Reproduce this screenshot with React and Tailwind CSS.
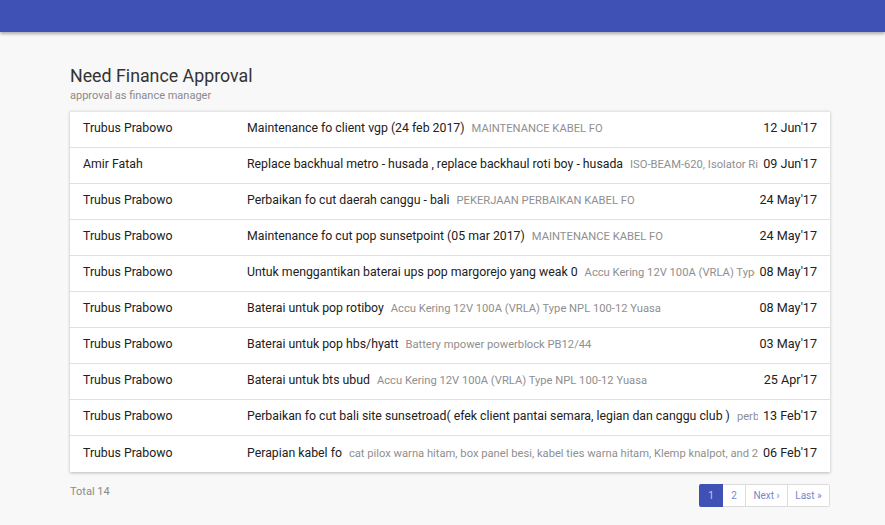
const rows = [
  ["Trubus Prabowo", "Maintenance fo client vgp (24 feb 2017)", "MAINTENANCE KABEL FO", "12 Jun'17"],
  ["Amir Fatah", "Replace backhual metro - husada , replace backhaul roti boy - husada", "ISO-BEAM-620, Isolator Rimbun, Isolator Gantung", "09 Jun'17"],
  ["Trubus Prabowo", "Perbaikan fo cut daerah canggu - bali", "PEKERJAAN PERBAIKAN KABEL FO", "24 May'17"],
  ["Trubus Prabowo", "Maintenance fo cut pop sunsetpoint (05 mar 2017)", "MAINTENANCE KABEL FO", "24 May'17"],
  ["Trubus Prabowo", "Untuk menggantikan baterai ups pop margorejo yang weak 0", "Accu Kering 12V 100A (VRLA) Type NPL 100-12 Yuasa", "08 May'17"],
  ["Trubus Prabowo", "Baterai untuk pop rotiboy", "Accu Kering 12V 100A (VRLA) Type NPL 100-12 Yuasa", "08 May'17"],
  ["Trubus Prabowo", "Baterai untuk pop hbs/hyatt", "Battery mpower powerblock PB12/44", "03 May'17"],
  ["Trubus Prabowo", "Baterai untuk bts ubud", "Accu Kering 12V 100A (VRLA) Type NPL 100-12 Yuasa", "25 Apr'17"],
  ["Trubus Prabowo", "Perbaikan fo cut bali site sunsetroad( efek client pantai semara, legian dan canggu club )", "perbaikan kabel fo", "13 Feb'17"],
  ["Trubus Prabowo", "Perapian kabel fo", "cat pilox warna hitam, box panel besi, kabel ties warna hitam, Klemp knalpot, and 2 more", "06 Feb'17"],
];

export default function App() {
  return (
    <div className="min-h-[525px] bg-[#f8f8f8] font-['Roboto',sans-serif] text-[#212121]">
      <div className="h-[32px] bg-[#3f51b5] shadow-[0_2px_3px_rgba(0,0,0,0.3)]" />

      <div className="ml-[70px] w-[760px] pt-[33px]">
        <h1 className="text-[17.8px] leading-[22px] text-[#333]">Need Finance Approval</h1>
        <p className="mt-[2px] text-[11px] leading-[14px] text-[#8a8a8a]">approval as finance manager</p>

        <div className="mt-[8px] border-t border-[#e6e6e6] bg-white shadow-[0_1px_3px_rgba(0,0,0,0.25)]">
          {rows.map((r, i) => (
            <div
              key={i}
              className="flex h-[36px] items-center border-b border-[#e0e0e0] pb-[2px] text-[12.3px] last:border-b-0"
            >
              <div className="w-[177px] shrink-0 whitespace-nowrap pl-[13px]">{r[0]}</div>
              <div className="min-w-0 flex-1 overflow-hidden whitespace-nowrap">
                {r[1]}
                <span className="ml-[7px] text-[11.2px] text-[#8f8f8f]">{r[2]}</span>
              </div>
              <div className="shrink-0 whitespace-nowrap pl-[5px] pr-[13px] text-[12.6px]">{r[3]}</div>
            </div>
          ))}
        </div>

        <div className="mt-[12px] flex items-start justify-between">
          <span className="text-[11px] text-[#8a8a8a]">Total 14</span>
          <div className="flex h-[23px] text-[10px] text-[#7986cb]">
            <span className="flex w-[24px] items-center justify-center rounded-l-[2px] bg-[#3f51b5] text-[#c5cae9]">1</span>
            <span className="flex w-[23px] items-center justify-center border-y border-r border-[#dcdcdc] bg-white">2</span>
            <span className="flex w-[42px] items-center justify-center border-y border-r border-[#dcdcdc] bg-white">Next ›</span>
            <span className="flex w-[42px] items-center justify-center rounded-r-[2px] border-y border-r border-[#dcdcdc] bg-white">Last »</span>
          </div>
        </div>
      </div>
    </div>
  );
}
